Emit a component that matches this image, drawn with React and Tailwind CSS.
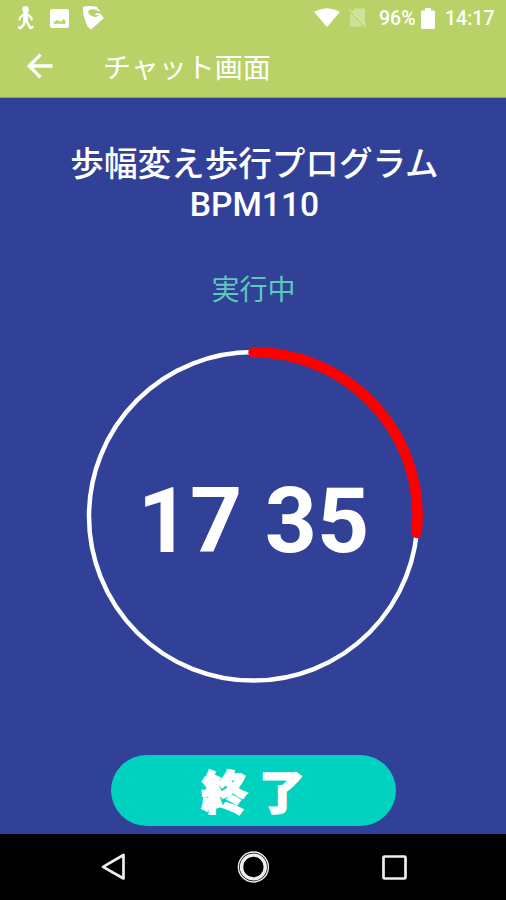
import React from 'react';

const StatusBar = () => (
    <div className="flex h-9 items-center text-white">
        <svg className="ml-[17px] h-7 w-[18px]" viewBox="0 0 18 28" fill="none" stroke="currentColor" strokeLinecap="round" strokeLinejoin="round">
            <circle cx="8.6" cy="5.4" r="3.3" fill="currentColor" stroke="none" />
            <path d="M8.7 10.5v6" strokeWidth="5" />
            <path d="M7 10L3.2 13.5l-.7 2M10.5 10l3.5 3.5.8 2" strokeWidth="2.2" />
            <path d="M7.7 17.5L6.5 21l-3.4 3.3M10 18l3.2 6 2.2-.9M3.1 24.3l-1-1" strokeWidth="2.5" />
        </svg>
        <svg className="ml-[15px] h-[19px] w-[19px]" viewBox="0 0 19 19">
            <path fill="currentColor" fillRule="evenodd" d="M2 0h15a2 2 0 0 1 2 2v15a2 2 0 0 1-2 2H2a2 2 0 0 1-2-2V2a2 2 0 0 1 2-2zM3.5 14.8h12V12l-2-2-2.6 3-1.3-.8L6.8 11l-3.3 2.5z" />
        </svg>
        <svg className="ml-[13px] h-6 w-[22px]" viewBox="0 0 22 24" fill="currentColor">
            <path d="M1.2.8Q6-.8 14.7.8L18.5 6l-3-1.6Q10 2 7 4.3c-1.8 2 .2 4.7 3.4 6 3 1.2 5.2.5 6.8-1L12.5 9l2.3-1.8 3.8.6 3.2 4.4L9 23.5l-3.5-3Q0 8 1.2.8z" />
        </svg>
        <svg className="ml-[210px] h-5 w-[26px]" viewBox="0 0 26 20" fill="currentColor">
            <path d="M0 3.8Q13-3.4 26 3.8L13 19.3z" />
        </svg>
        <svg className="ml-[9px] h-5 w-[18px]" viewBox="0 0 18 20">
            <path d="M6 .5h9q1 0 1 1v17H1V6z" fill="white" fillOpacity=".33" />
            <path d="M0 2l16 17" stroke="#b8d268" strokeWidth="1.8" />
            <path d="M0 .8l17.5 18.5" stroke="white" strokeOpacity=".3" strokeWidth="1.4" />
        </svg>
        <span className="ml-[12px] w-[37px] pt-[2px] text-[19.5px] font-medium whitespace-nowrap">96%</span>
        <svg className="ml-[5px] h-[21px] w-[14px]" viewBox="0 0 14 21" fill="currentColor">
            <path d="M4 0h6v2.4h3q1 0 1 1V20q0 1-1 1H1q-1 0-1-1V3.4q0-1 1-1h3z" />
        </svg>
        <span className="ml-[10px] pt-[2px] text-[19.5px] font-medium whitespace-nowrap">14:17</span>
    </div>
);

const Timer = () => (
    <div className="mt-[32px] grid h-[346px] w-[346px] place-items-center">
        <svg className="col-start-1 row-start-1 h-[346px] w-[346px]" viewBox="0 0 346 346" fill="none">
            <circle cx="173.3" cy="173.3" r="164.3" stroke="white" strokeWidth="4.5" />
            <path d="M173.5 9.3A164 164 0 0 1 336.7 190" stroke="red" strokeWidth="10.5" strokeLinecap="round" />
        </svg>
        <div className="col-start-1 row-start-1 mt-[11px] ml-[1px] text-[91px] leading-none font-bold whitespace-pre text-white">17 35</div>
    </div>
);

const NavBar = () => (
    <div className="flex h-[66px] items-center bg-black text-[#eee]">
        <svg className="ml-[101px] h-7 w-[25px]" viewBox="0 0 25 28" fill="none" stroke="currentColor" strokeWidth="2.7" strokeLinejoin="round">
            <path d="M22.5 2v23.5L2 13.8z" />
        </svg>
        <svg className="ml-[111px] h-[34px] w-[34px]" viewBox="0 0 34 34" fill="none" stroke="currentColor">
            <circle cx="16.4" cy="17" r="15" strokeWidth="1.4" />
            <circle cx="16.4" cy="17" r="11.9" strokeWidth="3.4" />
        </svg>
        <svg className="ml-[111px] h-[25px] w-[25px]" viewBox="0 0 25 25" fill="none" stroke="currentColor" strokeWidth="2.7">
            <rect x="1.5" y="1.5" width="22" height="22" rx="1" />
        </svg>
    </div>
);

const App = () => {
    return (
        <div className="flex h-[900px] w-[506px] flex-col overflow-hidden bg-[#314198] font-[Roboto,'Noto_Sans_CJK_JP',sans-serif]">
            <header className="h-[98px] shrink-0 border-b border-[#8d9f83] bg-[#b8d268]">
                <StatusBar />
                <div className="flex h-[60px] items-center text-white">
                    <svg className="ml-[26px] h-7 w-7" viewBox="0 0 28 28" fill="none" stroke="currentColor" strokeWidth="3.3">
                        <path d="M26.5 14H4M14.5 2.7L3.2 14l11.3 11.3" />
                    </svg>
                    <h1 className="ml-[49px] pt-[5px] text-[28px] leading-none">チャット画面</h1>
                </div>
            </header>

            <main className="flex flex-1 flex-col items-center">
                <h2 className="mt-[47px] ml-[3px] text-center text-[33.6px] leading-[40px] font-medium text-white">
                    歩幅変え歩行プログラム<br />BPM110
                </h2>
                <p className="mt-[46px] ml-[1px] h-[40px] text-[28px] leading-[40px] text-[#5dc9b9]">実行中</p>
                <Timer />
                <button className="mt-[66px] h-[71px] w-[285px] rounded-[36px] bg-[#00d2bf] pt-[4px] text-[46px] leading-none font-black text-white">
                    <span className="[-webkit-text-stroke:1.5px_white]">終 了</span>
                </button>
            </main>

            <NavBar />
        </div>
    );
};

export default App;
